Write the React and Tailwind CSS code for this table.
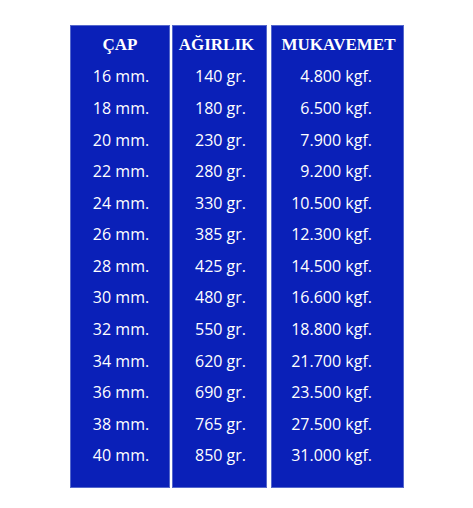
const capRows = ['16 mm.', '18 mm.', '20 mm.', '22 mm.', '24 mm.', '26 mm.', '28 mm.', '30 mm.', '32 mm.', '34 mm.', '36 mm.', '38 mm.', '40 mm.'];
const weightRows = ['140 gr.', '180 gr.', '230 gr.', '280 gr.', '330 gr.', '385 gr.', '425 gr.', '480 gr.', '550 gr.', '620 gr.', '690 gr.', '765 gr.', '850 gr.'];
const strengthRows = ['4.800 kgf.', '6.500 kgf.', '7.900 kgf.', '9.200 kgf.', '10.500 kgf.', '12.300 kgf.', '14.500 kgf.', '16.600 kgf.', '18.800 kgf.', '21.700 kgf.', '23.500 kgf.', '27.500 kgf.', '31.000 kgf.'];

const Column = ({ title, rows, width, align, head }) => (
    <div className={`flex flex-col bg-[#0a20b8] border border-[#5568cc] pt-[3px] pb-[16px] ${width}`}>
        <div className={`h-[31.6px] flex items-center justify-center font-['Liberation_Serif',serif] font-bold text-[17px] text-white ${head}`}>
            {title}
        </div>
        {rows.map((r) => (
            <div key={r} className={`h-[31.6px] flex items-center text-white text-[16px] font-['Open_Sans',sans-serif] ${align}`}>
                {r}
            </div>
        ))}
    </div>
);

const App = () => {
    return (
        <div className="w-[473px] h-[508px] bg-white pt-[25px] pl-[70px]">
            <div className="flex h-[463px]">
                <Column title="ÇAP" rows={capRows} width="w-[100px]" align="justify-center pl-[2px]" head="" />
                <div className="w-[2px]" />
                <Column title="AĞIRLIK" rows={weightRows} width="w-[95px]" align="justify-center pl-[2px]" head="pr-[6px]" />
                <div className="w-[4px]" />
                <Column title="MUKAVEMET" rows={strengthRows} width="w-[133px]" align="justify-end pr-[31px]" head="pl-[2px]" />
            </div>
        </div>
    );
};

export default App;
